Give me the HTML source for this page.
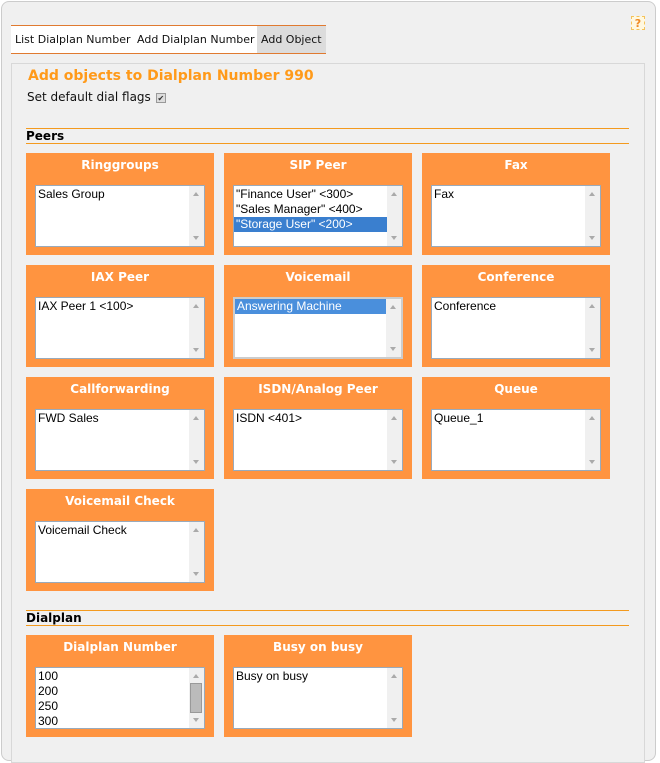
<!DOCTYPE html>
<html><head><style>
*{box-sizing:border-box;margin:0;padding:0}
body{width:660px;height:749px;background:#fff;font-family:"DejaVu Sans",sans-serif;position:relative;overflow:hidden}
.outer{position:absolute;left:1px;top:1px;width:655px;height:760px;border:1px solid #ccc;border-radius:8px;background:#f0f0f0}
.help{position:absolute;left:631px;top:16px;width:14px;height:14px;border:1px dashed #f5c35a;background:#fff8e0;color:#f08a24;font-size:11px;font-weight:bold;text-align:center;line-height:13px}
.tabs{position:absolute;left:11px;top:25px;width:315px;height:29px;border-top:1px solid #e07a30;border-bottom:1px solid #e07a30;background:#fff;font-size:11px;color:#111;white-space:nowrap}
.tabs span{position:absolute;top:0;height:27px;line-height:27px}
.panel{position:absolute;left:11px;top:63px;width:634px;height:700px;border:1px solid #d8d8d8;background:#f0f0f0}
h1{position:absolute;left:28px;top:68px;font-size:14px;color:#ff9a1a;font-weight:bold}
.flags{position:absolute;left:27px;top:90px;font-size:12px;color:#111}
.cb{display:inline-block;width:10px;height:10px;border:1px solid #999;background:#ddd;font-size:8px;line-height:9px;text-align:center;vertical-align:middle;margin-left:5px;color:#333}
.sec{position:absolute;left:26px;width:603px;height:16px;border-top:1px solid #f39a1e;border-bottom:1px solid #f39a1e;font-size:12px;font-weight:bold;color:#000;line-height:14px}
.box{position:absolute;width:188px;height:102px;background:#ff9440}
.box .t{position:absolute;left:0;right:0;top:5px;text-align:center;color:#fff;font-weight:bold;font-size:12px}
.lb{position:absolute;left:9px;top:32px;width:170px;height:62px;border:1px solid #9ab;background:#fff;font-family:"Liberation Sans",sans-serif;font-size:12px;color:#000;padding-top:1px}
.lb .it{height:15px;line-height:15px;padding-left:2px;margin-right:15px}
.lb .sel{background:#3a7fcf;color:#fff}
.sb{position:absolute;right:0;top:0;bottom:0;width:15px;background:#f0f0f0}
.sb:before{content:"";position:absolute;left:4px;top:6px;border:3.5px solid transparent;border-bottom:4px solid #aaa;border-top:0}
.sb:after{content:"";position:absolute;left:4px;bottom:6px;border:3.5px solid transparent;border-top:4px solid #aaa;border-bottom:0}
</style></head><body>
<div class="outer"></div>
<div class="help">?</div>
<div class="tabs"><span style="left:4px">List Dialplan Number</span><span style="left:126px">Add Dialplan Number</span><span style="left:246px;width:69px;background:#dcdcdc;padding-left:4px">Add Object</span></div>
<div class="panel"></div>
<h1>Add objects to Dialplan Number 990</h1>
<div class="flags">Set default dial flags<span class="cb">✔</span></div>
<div class="sec" style="top:128px">Peers</div>

<div class="box" style="left:26px;top:153px"><div class="t">Ringgroups</div><div class="lb"><div class="it">Sales Group</div><div class="sb"></div></div></div>
<div class="box" style="left:224px;top:153px"><div class="t">SIP Peer</div><div class="lb"><div class="it">"Finance User" &lt;300&gt;</div><div class="it">"Sales Manager" &lt;400&gt;</div><div class="it sel">"Storage User" &lt;200&gt;</div><div class="sb"></div></div></div>
<div class="box" style="left:422px;top:153px"><div class="t">Fax</div><div class="lb"><div class="it">Fax</div><div class="sb"></div></div></div>

<div class="box" style="left:26px;top:265px"><div class="t">IAX Peer</div><div class="lb"><div class="it">IAX Peer 1 &lt;100&gt;</div><div class="sb"></div></div></div>
<div class="box" style="left:224px;top:265px"><div class="t">Voicemail</div><div class="lb" style="border:2px solid #ccc;padding-top:0"><div class="it sel" style="background:#4a8fdc">Answering Machine</div><div class="sb"></div></div></div>
<div class="box" style="left:422px;top:265px"><div class="t">Conference</div><div class="lb"><div class="it">Conference</div><div class="sb"></div></div></div>

<div class="box" style="left:26px;top:377px"><div class="t">Callforwarding</div><div class="lb"><div class="it">FWD Sales</div><div class="sb"></div></div></div>
<div class="box" style="left:224px;top:377px"><div class="t">ISDN/Analog Peer</div><div class="lb"><div class="it">ISDN &lt;401&gt;</div><div class="sb"></div></div></div>
<div class="box" style="left:422px;top:377px"><div class="t">Queue</div><div class="lb"><div class="it">Queue_1</div><div class="sb"></div></div></div>

<div class="box" style="left:26px;top:489px"><div class="t">Voicemail Check</div><div class="lb"><div class="it">Voicemail Check</div><div class="sb"></div></div></div>

<div class="sec" style="top:610px">Dialplan</div>
<div class="box" style="left:26px;top:635px"><div class="t">Dialplan Number</div><div class="lb"><div class="it">100</div><div class="it">200</div><div class="it">250</div><div class="it">300</div><div class="sb"><div style="position:absolute;left:1px;top:15px;width:12px;height:30px;background:#bbb;border:1px solid #999"></div></div></div></div>
<div class="box" style="left:224px;top:635px"><div class="t">Busy on busy</div><div class="lb"><div class="it">Busy on busy</div><div class="sb"></div></div></div>
</body></html>
